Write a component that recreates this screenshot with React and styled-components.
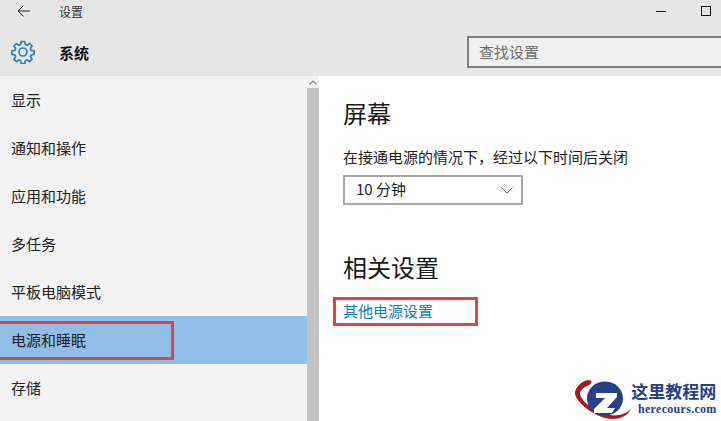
import styled, { createGlobalStyle } from 'styled-components'

const Global = createGlobalStyle`
  html, body { margin: 0; padding: 0; background: #fff; }
  body { font-family: "Noto Sans CJK SC", "Liberation Sans", sans-serif; }
`
const Page = styled.div`
  width: 721px;
  height: 421px;
  overflow: hidden;
  display: flex;
  flex-direction: column;
  position: relative;
`
const Header = styled.header`
  height: 76px;
  background: #e6e6e6;
  display: flex;
  flex-direction: column;
  flex-shrink: 0;
`
const TitleBar = styled.div`
  height: 23px;
  box-sizing: border-box;
  padding: 0 0 1px 17px;
  display: flex;
  align-items: center;
  font-size: 12px;
  color: #333;
`
const BackIcon = styled.svg`
  width: 13px;
  height: 12px;
  margin-right: 29px;
`
const WindowButtons = styled.div`
  margin-left: auto;
  display: flex;
  align-items: center;
  gap: 35px;
  padding-right: 10px;
`
const MinimizeMark = styled.span`
  width: 10px;
  height: 1px;
  background: #111;
`
const MaximizeMark = styled.span`
  width: 8px;
  height: 8px;
  border: 1px solid #111;
`
const SearchRow = styled.div`
  flex: 1;
  display: flex;
  align-items: center;
  padding: 5px 0 0 11px;
`
const GearIcon = styled.svg`
  width: 24px;
  height: 24px;
  margin-right: 24px;
`
const SectionName = styled.div`
  font-size: 15px;
  font-weight: 700;
  color: #111;
`
const SearchBox = styled.div`
  margin-left: auto;
  width: 254px;
  height: 32px;
  box-sizing: border-box;
  border: 2px solid #7f7f7f;
  border-right: 0;
  background: #efefef;
  color: #6e6e6e;
  font-size: 15px;
  line-height: 27px;
  padding-left: 10px;
`
const Body = styled.div`
  flex: 1;
  display: flex;
  min-height: 0;
`
const Sidebar = styled.nav`
  width: 307px;
  background: #f2f2f2;
  display: flex;
  flex-direction: column;
  flex-shrink: 0;
`
const NavItem = styled.div`
  height: 48px;
  flex-shrink: 0;
  box-sizing: border-box;
  padding: 0 0 2px 11px;
  display: flex;
  align-items: center;
  font-size: 15px;
  color: #222;
  background: ${props => (props.$active ? '#8fbfe6' : 'transparent')};
`
const Scrollbar = styled.div`
  width: 12px;
  flex-shrink: 0;
  display: flex;
  flex-direction: column;
  background: #f2f2f2;
`
const ScrollUp = styled.div`
  height: 12px;
  display: flex;
  align-items: center;
  justify-content: center;
`
const ScrollThumb = styled.div`
  flex: 1;
  background: #c2c2c2;
`
const Content = styled.main`
  flex: 1;
  padding: 21px 0 0 24px;
  display: flex;
  flex-direction: column;
  align-items: flex-start;
`
const Heading = styled.h2`
  margin: 0;
  font-size: 24px;
  line-height: 32px;
  font-weight: 400;
  color: #1a1a1a;
`
const Label = styled.div`
  margin-top: 18px;
  font-size: 15px;
  line-height: 20px;
  color: #222;
`
const Select = styled.div`
  margin-top: 8px;
  margin-bottom: 46px;
  width: 180px;
  height: 30px;
  box-sizing: border-box;
  border: 2px solid #a6a6a6;
  display: flex;
  align-items: center;
  justify-content: space-between;
  padding: 0 8px 3px 11px;
  font-size: 15px;
  color: #222;
`
const Chevron = styled.svg`
  width: 12px;
  height: 7px;
  margin-top: 3px;
`
const LinkBox = styled.div`
  margin: 14px 0 0 -10px;
  width: 145px;
  height: 29px;
  box-sizing: border-box;
  border: 3px solid #e8404a;
  padding-left: 7px;
  color: #0f7ec2;
  font-size: 15px;
  line-height: 21px;
`
const HighlightFrame = styled.div`
  position: absolute;
  left: -3px;
  top: 321px;
  width: 177px;
  height: 39px;
  box-sizing: border-box;
  border: 3px solid #e8404a;
`
const Watermark = styled.div`
  position: absolute;
  left: 575px;
  top: 379px;
  display: flex;
  align-items: flex-start;
`
const WatermarkText = styled.div`
  display: flex;
  flex-direction: column;
  align-items: center;
  color: #27408b;
  margin-left: -1px;
`
const WatermarkTitle = styled.div`
  font-size: 17px;
  line-height: 24px;
  font-weight: 700;
`
const WatermarkUrl = styled.div`
  font-family: "Liberation Serif", serif;
  font-weight: 700;
  font-size: 12px;
  line-height: 13px;
  letter-spacing: 0.3px;
  margin-left: 7px;
`

const navItems = ['显示', '通知和操作', '应用和功能', '多任务', '平板电脑模式', '电源和睡眠', '存储']

const App = () => {
  return (
    <Page>
      <Global />
      <Header>
        <TitleBar>
          <BackIcon viewBox="0 0 13 12" fill="none" stroke="#222" strokeWidth="1">
            <path d="M13 6H1M6.5 .5 1 6l5.5 5.5" />
          </BackIcon>
          设置
          <WindowButtons>
            <MinimizeMark />
            <MaximizeMark />
          </WindowButtons>
        </TitleBar>
        <SearchRow>
          <GearIcon viewBox="0 0 24 24" fill="none" stroke="#2f7fc4" strokeWidth="1.7" strokeLinejoin="round">
            <path d="M10.2 1.5h3.6l.5 2.9 1.9.8 2.4-1.7 2.5 2.5-1.7 2.4.8 1.9 2.9.5v3.600l-2.9.5-.8 1.9 1.7 2.4-2.5 2.5-2.4-1.7-1.9.8-.5 2.9h-3.600l-.5-2.9-1.9-.8-2.4 1.7-2.5-2.5 1.7-2.4-.8-1.9-2.9-.5v-3.600l2.9-.5.8-1.9-1.7-2.4 2.5-2.5 2.4 1.7 1.900-.8z" />
            <circle cx="12" cy="12" r="4" />
          </GearIcon>
          <SectionName>系统</SectionName>
          <SearchBox>查找设置</SearchBox>
        </SearchRow>
      </Header>
      <Body>
        <Sidebar>
          {navItems.map((item, i) => (
            <NavItem key={item} $active={i === 5}>{item}</NavItem>
          ))}
        </Sidebar>
        <Scrollbar>
          <ScrollUp>
            <svg width="8" height="5" viewBox="0 0 8 5" fill="none" stroke="#8a8a8a" strokeWidth="1.2">
              <path d="M.5 4.500 4 1l3.500 3.500" />
            </svg>
          </ScrollUp>
          <ScrollThumb />
        </Scrollbar>
        <Content>
          <Heading>屏幕</Heading>
          <Label>在接通电源的情况下，经过以下时间后关闭</Label>
          <Select>
            10 分钟
            <Chevron viewBox="0 0 12 7" fill="none" stroke="#666" strokeWidth="1">
              <path d="M.5.500l5.500 5.500L11.500.500" />
            </Chevron>
          </Select>
          <Heading>相关设置</Heading>
          <LinkBox>其他电源设置</LinkBox>
        </Content>
      </Body>
      <HighlightFrame />
      <Watermark>
        <svg width="57" height="42" viewBox="0 0 57 42">
          <path d="M14 1C8 1 0 8 0 14c0 8 16 21 30 25 12 3 22-1 26-9-6 6-16 8-26 5C18 31 6 22 5 15c0-4 4-7 9-9 3-1 3-5 0-5z" fill="#a5191e" />
          <ellipse cx="30" cy="19.500" rx="18" ry="17" fill="#27408b" />
          <path d="M21 14h21v4L32 29h8l-3 5H19v-4l11-11h-9z" fill="#fff" />
        </svg>
        <WatermarkText>
          <WatermarkTitle>这里教程网</WatermarkTitle>
          <WatermarkUrl>herecours.com</WatermarkUrl>
        </WatermarkText>
      </Watermark>
    </Page>
  )
}

export default App
